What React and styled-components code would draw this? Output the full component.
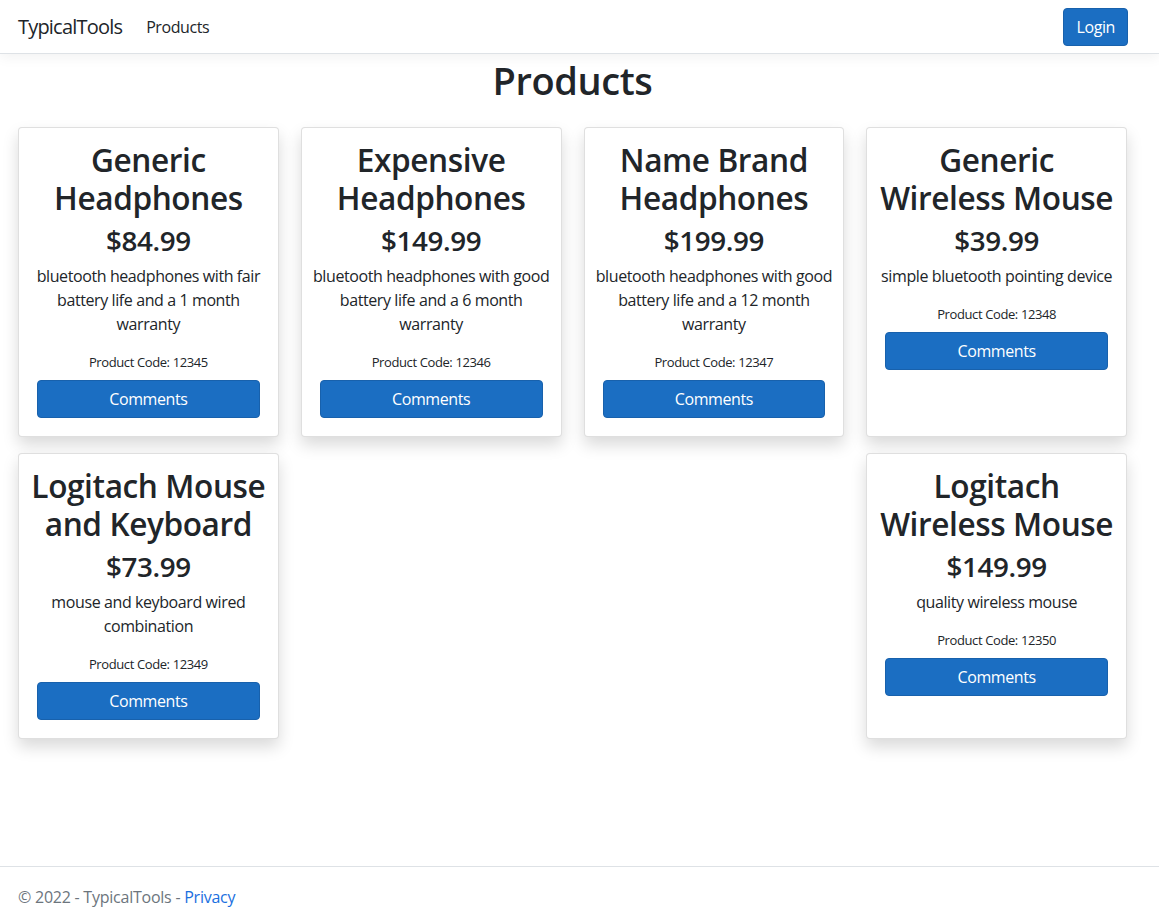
import React from "react";
import styled, { createGlobalStyle } from "styled-components";

const GlobalStyle = createGlobalStyle`
  html, body {
    margin: 0;
    padding: 0;
    background: #ffffff;
  }
  body {
    font-family: "Open Sans", "Noto Sans", sans-serif;
    font-size: 16px;
    line-height: 1.5;
    color: #212529;
    letter-spacing: -0.025em;
  }
  * { box-sizing: border-box; }
`;

const Page = styled.div`
  min-height: 100vh;
  display: flex;
  flex-direction: column;
`;

const NavBar = styled.header`
  height: 54px;
  display: flex;
  align-items: center;
  padding: 0 31px 0 18px;
  background: #fff;
  border-bottom: 1px solid #dee2e6;
  box-shadow: 0 4px 12px rgba(0, 0, 0, 0.05);
  position: relative;
  z-index: 1;
`;

const Brand = styled.a`
  font-size: 20px;
  line-height: 30px;
  letter-spacing: -0.04em;
  color: #212529;
  text-decoration: none;
  margin-right: 16px;
`;

const NavLink = styled.a`
  font-size: 16px;
  color: #212529;
  text-decoration: none;
  padding: 8px;
`;

const Spacer = styled.div`
  flex: 1;
`;

const PrimaryButton = styled.button`
  font-family: inherit;
  letter-spacing: inherit;
  font-size: 16px;
  line-height: 24px;
  padding: 6px 12px;
  color: #fff;
  background: #1b6ec2;
  border: 1px solid #1861ac;
  border-radius: 4px;
  cursor: pointer;
`;

const Main = styled.main`
  flex: 1;
  padding: 0 32px 40px 18px;
`;

const Title = styled.h1`
  margin: 4px 0 25px;
  font-size: 38px;
  line-height: 44px;
  font-weight: 600;
  text-align: center;
`;

const CardGrid = styled.div`
  display: flex;
  flex-wrap: wrap;
  justify-content: space-between;
  row-gap: 16px;
`;

const Card = styled.div`
  width: calc((100% - 66px) / 4);
  background: #fff;
  border: 1px solid rgba(0, 0, 0, 0.125);
  border-radius: 4px;
  box-shadow: 0 8px 16px rgba(0, 0, 0, 0.15);
  padding: 13px 0 18px;
  display: flex;
  flex-direction: column;
  text-align: center;
`;

const CardName = styled.h2`
  margin: 0 8px 7px;
  font-size: 31.6px;
  line-height: 1.2;
  font-weight: 600;
`;

const Price = styled.h3`
  margin: 0 8px 7px;
  font-size: 27.75px;
  line-height: 1.2;
  font-weight: 600;
`;

const Description = styled.p`
  margin: 0 8px 16px;
  font-size: 16px;
  line-height: 24px;
`;

const Code = styled.div`
  font-size: 13px;
  line-height: 21px;
  letter-spacing: -0.03em;
  margin: 0 8px 7px;
`;

const CommentsButton = styled(PrimaryButton)`
  margin: 0 18px;
`;

const Footer = styled.footer`
  border-top: 1px solid #dee2e6;
  padding: 18px 18px 13px;
  font-size: 16px;
  line-height: 24px;
  letter-spacing: -0.015em;
  color: #6c757d;
  white-space: nowrap;
`;

const FooterLink = styled.a`
  color: #1a6fe0;
  text-decoration: none;
`;

const products = [
  { name: "Generic Headphones", price: "$84.99", desc: "bluetooth headphones with fair battery life and a 1 month warranty", code: 12345 },
  { name: "Expensive Headphones", price: "$149.99", desc: "bluetooth headphones with good battery life and a 6 month warranty", code: 12346 },
  { name: "Name Brand Headphones", price: "$199.99", desc: "bluetooth headphones with good battery life and a 12 month warranty", code: 12347 },
  { name: "Generic Wireless Mouse", price: "$39.99", desc: "simple bluetooth pointing device", code: 12348 },
  { name: "Logitach Mouse and Keyboard", price: "$73.99", desc: "mouse and keyboard wired combination", code: 12349 },
  { name: "Logitach Wireless Mouse", price: "$149.99", desc: "quality wireless mouse", code: 12350 },
];

export default function App() {
  return (
    <Page>
      <GlobalStyle />
      <NavBar>
        <Brand href="#">TypicalTools</Brand>
        <NavLink href="#">Products</NavLink>
        <Spacer />
        <PrimaryButton>Login</PrimaryButton>
      </NavBar>
      <Main>
        <Title>Products</Title>
        <CardGrid>
          {products.map((p) => (
            <Card key={p.code}>
              <CardName>{p.name}</CardName>
              <Price>{p.price}</Price>
              <Description>{p.desc}</Description>
              <Code>Product Code: {p.code}</Code>
              <CommentsButton>Comments</CommentsButton>
            </Card>
          ))}
        </CardGrid>
      </Main>
      <Footer>
        © 2022 - TypicalTools - <FooterLink href="#">Privacy</FooterLink>
      </Footer>
    </Page>
  );
}
